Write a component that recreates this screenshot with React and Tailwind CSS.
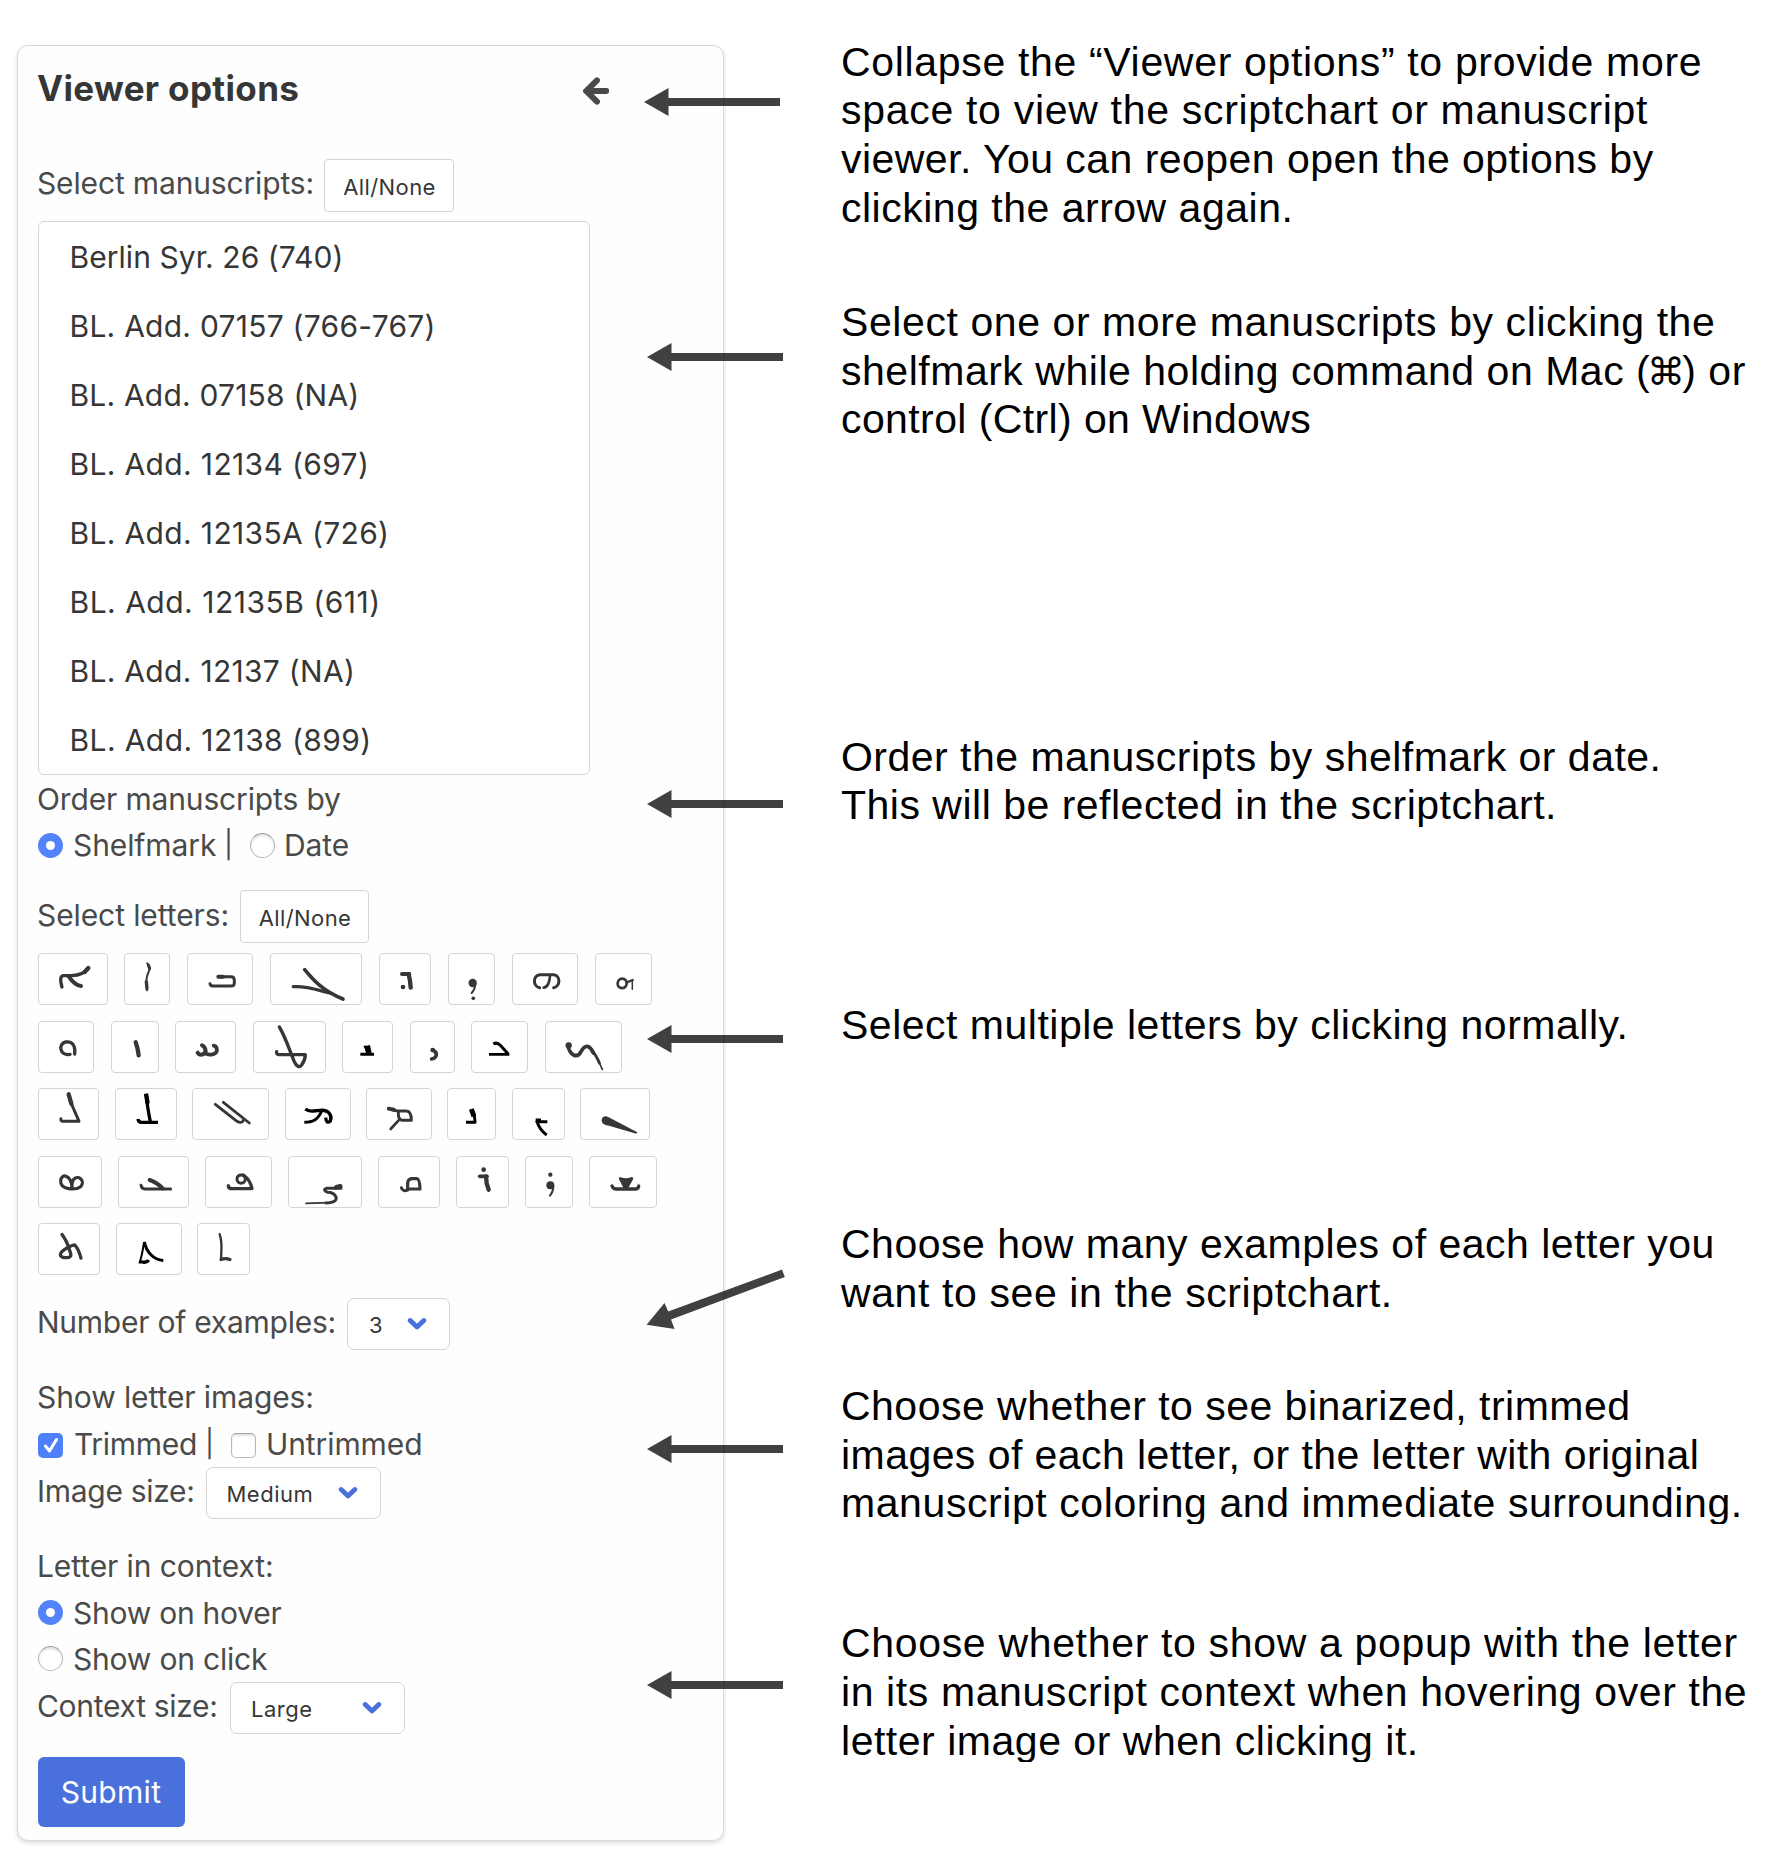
import React from 'react';

const manuscripts = [
  ['Berlin Syr. 26 (740)', 'tracking-[0.05px]'],
  ['BL. Add. 07157 (766-767)', 'tracking-[0.25px]'],
  ['BL. Add. 07158 (NA)', 'tracking-[0.2px]'],
  ['BL. Add. 12134 (697)', 'tracking-[0.35px]'],
  ['BL. Add. 12135A (726)', 'tracking-[0.35px]'],
  ['BL. Add. 12135B (611)', 'tracking-[0.5px]'],
  ['BL. Add. 12137 (NA)', 'tracking-[0.3px]'],
  ['BL. Add. 12138 (899)', 'tracking-[0.4px]'],
];

// Syriac letter forms. Each tile is drawn at three units per pixel:
// x/w give the tile extent, s the pen strokes [path, width], f the filled shapes,
// d the dots [cx, cy, r], k marks the darker ink.
const letterRows = [
  {
    y: 40,
    gap: 'gap-[16.75px]',
    tiles: [
      { x: 24, w: 210, s: [['M96 142C89 118 92 108 101 108H125C148 107 166 98 175 85', 10], ['M116 110C128 128 138 137 153 139', 12], ['M164 97L175 85', 13]] },
      { x: 286, w: 137, s: [['M356 71C368 84 362 92 357 104C352 116 352 130 355 152', 6], ['M359 76L363 87', 9], ['M353 126L355 146', 10]] },
      { x: 472, w: 199, s: [['M567 111H604Q614 111 614 122V130Q614 139 604 139H552Q542 139 541 132', 9], ['M566 111H580', 12]] },
      { x: 721, w: 278, s: [['M825 90C850 120 880 155 940 178', 11], ['M791 141C830 138 860 150 900 160', 10]] },
      { x: 118, w: 157, s: [['M187 103H209', 12], ['M207 104Q212 122 213 144', 13]], d: [[190, 142, 7]] },
      { x: 325, w: 140, s: [['M407 131Q407 149 396 160', 6]], d: [[399, 130, 12.5], [401, 176, 5.5]] },
      { x: 515, w: 200, s: [['M598 144C577 140 577 107 599 105H640C661 107 661 140 640 144', 9], ['M629 106C629 124 622 144 610 144', 8]] },
      { x: 766, w: 170, s: [['M861 131C861 150 833 150 834 132C834 112 861 112 861 131', 8], ['M862 128L879 121', 7], ['M878 122V149', 4.5]] },
    ],
  },
  {
    y: 242,
    gap: 'gap-[16.5px]',
    tiles: [
      { x: 24, w: 170, s: [['M120 342C88 348 84 309 107 305C131 302 136 320 134 341', 10]] },
      { x: 241, w: 144, s: [['M315 306Q322 325 324 345', 13]] },
      { x: 436, w: 184, s: [['M504 337C509 346 526 345 528 332Q527 320 517 315', 12], ['M526 336C532 346 560 346 562 330Q562 318 552 316', 11]] },
      { x: 670, w: 218, s: [['M749 260C765 285 780 330 793 362Q805 388 816 374Q827 358 827 343H748Q739 342 741 334', 10]] },
      { x: 5, w: 153, k: true, s: [['M60 342H101', 9], ['M72 323Q80 319 84 338', 13], ['M81 316L86 338', 16]] },
      { x: 208, w: 136, s: [['M276 329Q290 336 286 347Q282 355 273 356', 11]], d: [[276, 329, 7]] },
      { x: 394, w: 171, k: true, s: [['M448 342H509', 8], ['M461 311Q472 304 482 315L505 340', 9]] },
      { x: 615, w: 230, s: [['M684 315C688 345 712 356 723 334C735 312 748 312 760 338', 11], ['M754 326C768 346 774 356 778 368', 9], ['M770 350L787 387', 5]], d: [[686, 315, 9.5]] },
    ],
  },
  {
    y: 39,
    gap: 'gap-[15.8px]',
    tiles: [
      { x: 24, w: 185, s: [['M116 58C120 85 138 115 147 139H98Q91 138 93 131', 9], ['M116 58L124 86', 13]] },
      { x: 256, w: 185, k: true, s: [['M350 60C352 90 358 120 362 140', 10], ['M325 132Q326 142 335 142H385', 10], ['M349 56L354 86', 13]] },
      { x: 490, w: 229, s: [['M560 88L625 139Q640 147 645 134', 8.5], ['M584 82L662 144', 8.5]] },
      { x: 766, w: 198, k: true, s: [['M827 102Q835 109 850 108L872 106C900 104 908 124 902 138Q890 148 888 128', 10], ['M876 108C864 135 850 142 824 142', 9]] },
      { x: 82, w: 196, s: [['M150 101Q165 108 178 108H203Q218 108 218 136H190Q178 135 179 110', 9], ['M182 134L156 162', 8], ['M150 101L166 104', 11]] },
      { x: 325, w: 145, k: true, s: [['M398 106Q409 118 409 142H382', 9], ['M398 102L406 124', 15]] },
      { x: 515, w: 159, k: true, s: [['M621 140H596', 9], ['M589 137Q597 164 619 180', 9], ['M586 137H602', 13]] },
      { x: 721, w: 208, f: ['M786 135Q788 121 804 125L893 172L890 176L808 152Q784 149 786 135Z'] },
    ],
  },
  {
    y: 243,
    gap: 'gap-[16px]',
    tiles: [
      { x: 24, w: 192, s: [['M126 336C122 298 94 294 92 317C90 346 138 346 152 335C168 315 143 298 130 314Q125 325 126 338', 9.5]] },
      { x: 266, w: 215, s: [['M335 331Q337 342 347 342H424', 9], ['M361 315Q382 322 400 340', 12]] },
      { x: 530, w: 201, s: [['M651 312C651 329 626 329 626 312C626 296 651 296 651 312', 9], ['M645 300Q666 315 671 341H612Q600 341 600 332', 10]] },
      { x: 781, w: 221, s: [['M835 385L905 383', 5.5], ['M895 384Q930 382 925 366Q918 352 900 352Q884 345 896 340H940', 9], ['M926 337L938 334', 14]] },
      { x: 118, w: 186, s: [['M188 338Q192 351 207 345', 9], ['M207 342V324Q208 311 222 311H234Q243 311 244 342Z', 9.5]] },
      { x: 350, w: 159, s: [['M421 304H443', 11], ['M440 304Q440 325 448 344', 13]], d: [[433, 284, 7]] },
      { x: 556, w: 145, s: [['M641 334Q641 350 631 362', 6]], d: [[632, 299, 6.5], [632, 331, 12]] },
      { x: 748, w: 205, s: [['M817 333Q820 342 830 342H888Q897 341 897 333', 10], ['M842 311Q858 318 876 311L861 338H856Z', 9]], f: ['M842 311Q858 318 876 311L861 338H856Z'] },
    ],
  },
  {
    y: 444.5,
    gap: 'gap-[15.8px]',
    tiles: [
      { x: 24, w: 188, s: [['M96 479Q112 500 120 530Q130 552 102 548Q84 545 96 530Q115 514 134 510Q146 522 153 550', 10]] },
      { x: 259, w: 197, k: true, s: [['M344 501C350 530 370 555 401 557', 9], ['M343 502Q338 540 329 566', 6], ['M330 560Q350 566 357 556', 10]] },
      { x: 505, w: 157, s: [['M573 478Q580 500 578 530L577 554', 7], ['M577 554Q590 549 604 554', 9.5]] },
    ],
  },
];

const notes = [
  {
    gap: 'mt-[37.9px]',
    arrow: 'left-[-197px] top-[49px]',
    lines: [
      ['Collapse the “Viewer options” to provide more', 'tracking-[0.67px]'],
      ['space to view the scriptchart or manuscript', 'tracking-[0.7px]'],
      ['viewer. You can reopen open the options by', 'tracking-[0.46px]'],
      ['clicking the arrow again.', 'tracking-[0.5px]'],
    ],
  },
  {
    gap: 'mt-[66px]',
    arrow: 'left-[-194px] top-[44px]',
    lines: [
      ['Select one or more manuscripts by clicking the', 'tracking-[0.58px]'],
      ['shelfmark while holding command on Mac (⌘) or', 'tracking-[0.52px]'],
      ['control (Ctrl) on Windows', 'tracking-[0.4px]'],
    ],
  },
  {
    gap: 'mt-[288.8px]',
    arrow: 'left-[-194px] top-[56px]',
    lines: [
      ['Order the manuscripts by shelfmark or date.', 'tracking-[0.48px]'],
      ['This will be reflected in the scriptchart.', 'tracking-[0.5px]'],
    ],
  },
  {
    gap: 'mt-[171.2px]',
    arrow: 'left-[-194px] top-[22.4px]',
    lines: [['Select multiple letters by clicking normally.', 'tracking-[0.5px]']],
  },
  {
    gap: 'mt-[170.3px]',
    slanted: true,
    arrow: 'left-[-195px] top-[44.5px]',
    lines: [
      ['Choose how many examples of each letter you', 'tracking-[0.5px]'],
      ['want to see in the scriptchart.', 'tracking-[0.6px]'],
    ],
  },
  {
    gap: 'mt-[64.9px]',
    arrow: 'left-[-194px] top-[51.5px]',
    clip: 'h-[142.2px] overflow-hidden',
    lines: [
      ['Choose whether to see binarized, trimmed', 'tracking-[0.48px]'],
      ['images of each letter, or the letter with original', 'tracking-[0.44px]'],
      ['manuscript coloring and immediate surrounding.', 'tracking-[0.58px]'],
    ],
  },
  {
    gap: 'mt-[95px]',
    arrow: 'left-[-194px] top-[50.5px]',
    clip: 'h-[143px] overflow-hidden',
    lines: [
      ['Choose whether to show a popup with the letter', 'tracking-[0.67px]'],
      ['in its manuscript context when hovering over the', 'tracking-[0.6px]'],
      ['letter image or when clicking it.', 'tracking-[0.52px]'],
    ],
  },
];

function Letter({ tile, y }) {
  const ink = tile.k ? '#000' : '#363636';
  return (
    <button
      className="h-[52px] shrink-0 overflow-hidden rounded-[4px] border border-[#d4d4d4] bg-white"
      style={{ width: tile.w / 3 }}
    >
      <svg
        className="-m-px block h-[52px]"
        style={{ width: tile.w / 3 }}
        viewBox={`${tile.x} ${y} ${tile.w} 156`}
        fill="none"
        strokeLinecap={tile.k ? 'butt' : 'round'}
        strokeLinejoin="round"
      >
        {(tile.s || []).map(([d, width]) => (
          <path key={d + width} d={d} stroke={ink} strokeWidth={width} />
        ))}
        {(tile.f || []).map((d) => (
          <path key={d} d={d} fill={ink} />
        ))}
        {(tile.d || []).map(([cx, cy, r]) => (
          <circle key={`${cx}-${cy}`} cx={cx} cy={cy} r={r} fill={ink} />
        ))}
      </svg>
    </button>
  );
}

function AllNone({ className }) {
  return (
    <button
      className={`flex h-[53px] items-center justify-center rounded-[4px] border border-[#d4d4d4] bg-white pt-[3px] pl-px text-[22px] tracking-[0.4px] text-[#363636] ${className}`}
    >
      All/None
    </button>
  );
}

function Select({ value, className }) {
  return (
    <button
      className={`flex h-[52.5px] items-center justify-between rounded-[7px] border border-[#d4d4d4] bg-white pr-[22px] text-[22px] tracking-[0.5px] text-[#363636] ${className}`}
    >
      <span className="mt-[2px]">{value}</span>
      <svg className="h-[14px] w-[20px]" viewBox="0 0 20 14" fill="none">
        <path d="M3.2 3.5L10 10L16.8 3.5" stroke="#4a70dc" strokeWidth="4.8" strokeLinecap="round" strokeLinejoin="round" />
      </svg>
    </button>
  );
}

function Radio({ checked }) {
  return checked ? (
    <span className="flex size-[25px] shrink-0 items-center justify-center rounded-full bg-[#5283fb]">
      <span className="size-[9px] rounded-full bg-white" />
    </span>
  ) : (
    <span className="size-[25px] shrink-0 rounded-full border-[1.5px] border-[#b8b8b8] border-t-[#9c9c9c] bg-white shadow-[inset_0_2px_2px_rgba(0,0,0,0.12)]" />
  );
}

function Checkbox({ checked }) {
  return checked ? (
    <span className="mt-[3px] flex size-[25px] shrink-0 items-center justify-center rounded-[5px] bg-[#4d80fa]">
      <svg className="size-[24px]" viewBox="0 0 24 24" fill="none">
        <path d="M6.5 13L10.5 18L17.5 6.5" stroke="#fff" strokeWidth="3" strokeLinecap="round" strokeLinejoin="round" />
      </svg>
    </span>
  ) : (
    <span className="mt-[3px] size-[25px] shrink-0 rounded-[5px] border-[1.5px] border-[#b8b8b8] border-t-[#a4a4a4] bg-white shadow-[inset_0_2px_2px_rgba(0,0,0,0.12)]" />
  );
}

function Arrow({ slanted, className }) {
  return slanted ? (
    <svg className={`absolute h-[64px] w-[142px] ${className}`} viewBox="646 1265 142 64">
      <path
        d="M646.6 1324.7L664.5 1303L668.2 1311.5L782 1269.6L784.8 1277L671 1319.4L674.6 1329Z"
        fill="#000"
        fillOpacity="0.75"
      />
    </svg>
  ) : (
    <svg className={`absolute h-[30px] w-[140px] ${className}`} viewBox="0 0 140 30">
      <path d="M0 15L24.5 1V11H136V19H24.5V29Z" fill="#000" fillOpacity="0.75" />
    </svg>
  );
}

export default function App() {
  return (
    <main className="flex h-[1866px] w-[1778px] overflow-hidden bg-white">
      <section className="mt-[45px] ml-[17px] flex h-[1796px] w-[707px] shrink-0 flex-col rounded-[11px] border border-[#dadada] bg-[#fefefe] pt-[22px] pl-[19.5px] font-['Inter',sans-serif] text-[30px] leading-[46.9px] tracking-[-0.1px] whitespace-nowrap text-[#4a4a4a] shadow-[0_2px_4px_rgba(0,0,0,0.14)]">
        <header className="flex h-[40px] shrink-0 items-center">
          <h1 className="w-[545px] text-[35px] leading-[40px] font-bold tracking-[0.35px] text-[#363636]">
            <span className="ml-[-0.5px]">Viewer options</span>
          </h1>
          <svg className="mt-[5px] h-[28px] w-[26.3px]" viewBox="37 25 79 84" fill="none" stroke="#4a4a4a">
            <path d="M79 35L47 67L79 99" strokeWidth="18" strokeLinecap="round" />
            <path d="M52 67H107" strokeWidth="18" />
            <path d="M104 67H107" strokeWidth="18" strokeLinejoin="round" strokeLinecap="round" />
          </svg>
        </header>

        <div className="mt-[51px] flex h-[53px] shrink-0 items-center">
          <span className="mb-[5px] w-[286.5px]">
            <span className="ml-[-0.5px] tracking-[-0.15px]">Select manuscripts:</span>
          </span>
          <AllNone className="w-[130px]" />
        </div>

        <ul className="mt-[9px] h-[554px] w-[552px] shrink-0 rounded-[6px] border border-[#d4d4d4] bg-white pt-[1.4px] text-[#363636]">
          {manuscripts.map(([name, tracking]) => (
            <li key={name} className={`h-[68.9px] pl-[31px] leading-[68.9px] ${tracking}`}>
              {name}
            </li>
          ))}
        </ul>

        <div className="h-[47px] shrink-0 pt-px">
          <span className="ml-[-0.5px] tracking-[-0.15px]">Order manuscripts by</span>
        </div>
        <div className="flex h-[47px] shrink-0 items-center pl-[0.5px]">
          <Radio checked />
          <span className="ml-[10px] w-[151px]">Shelfmark</span>
          <span className="w-[26px] text-[27px]">|</span>
          <Radio />
          <span className="ml-[9px]">Date</span>
        </div>

        <div className="mt-[21px] flex h-[53px] shrink-0 items-center">
          <span className="mb-[3px] w-[202.5px]">
            <span className="ml-[-0.5px]">Select letters:</span>
          </span>
          <AllNone className="w-[129px]" />
        </div>

        <div className="mt-[10px] shrink-0">
          {letterRows.map((row) => (
            <div key={row.y} className={`flex h-[67.6px] ${row.gap}`}>
              {row.tiles.map((tile) => (
                <Letter key={tile.x} tile={tile} y={row.y} />
              ))}
            </div>
          ))}
        </div>

        <div className="mt-[7px] flex h-[52.5px] shrink-0 items-center">
          <span className="mb-[3px] w-[309.5px]">
            <span className="ml-[-0.5px] tracking-[-0.25px]">Number of examples:</span>
          </span>
          <Select value="3" className="w-[103px] pl-[21px]" />
        </div>

        <div className="mt-[23px] h-[47px] shrink-0 pt-px">
          <span className="ml-[-0.5px]">Show letter images:</span>
        </div>
        <div className="flex h-[47px] shrink-0 items-center pl-[0.5px]">
          <Checkbox checked />
          <span className="ml-[11px] w-[131px] tracking-[-0.3px]">Trimmed</span>
          <span className="w-[26px] text-[27px]">|</span>
          <Checkbox />
          <span className="ml-[10px]">Untrimmed</span>
        </div>
        <div className="flex h-[52px] shrink-0 items-center">
          <span className="mb-[5px] w-[168px]">
            <span className="ml-[-0.5px] tracking-[-0.3px]">Image size:</span>
          </span>
          <Select value="Medium" className="-mt-px w-[175px] pl-[20px]" />
        </div>

        <div className="mt-[22.5px] h-[47px] shrink-0 pt-px">
          <span className="ml-[-0.5px]">Letter in context:</span>
        </div>
        <div className="flex h-[47px] shrink-0 items-center pt-px pl-[0.5px]">
          <Radio checked />
          <span className="ml-[10px] tracking-[-0.25px]">Show on hover</span>
        </div>
        <div className="flex h-[46px] shrink-0 items-center pl-[0.5px]">
          <Radio />
          <span className="ml-[10px] tracking-[-0.2px]">Show on click</span>
        </div>
        <div className="flex h-[52px] shrink-0 items-center">
          <span className="mb-[4px] w-[192.5px]">
            <span className="ml-[-0.5px] tracking-[-0.3px]">Context size:</span>
          </span>
          <Select value="Large" className="w-[175px] pl-[20px]" />
        </div>

        <button className="mt-[23px] h-[70px] w-[147px] shrink-0 rounded-[6px] bg-[#4a70dc] pt-px tracking-[0.3px] text-white">
          Submit
        </button>
      </section>

      <aside className="ml-[117px] flex shrink-0 flex-col font-['Liberation_Sans',sans-serif] text-[41px] leading-[48.6px] whitespace-nowrap text-black">
        {notes.map((note) => (
          <div key={note.lines[0][0]} className={`relative shrink-0 ${note.gap}`}>
            <Arrow slanted={note.slanted} className={note.arrow} />
            <p className={note.clip}>
              {note.lines.map(([line, tracking]) => (
                <span key={line} className={`block h-[48.6px] ${tracking}`}>
                  {line.split('⌘').map((part, i) => (
                    <React.Fragment key={part}>
                      {i > 0 && <span className="ml-[-3px] mr-[-3px] text-[38px] tracking-normal">⌘</span>}
                      {part}
                    </React.Fragment>
                  ))}
                </span>
              ))}
            </p>
          </div>
        ))}
      </aside>
    </main>
  );
}
